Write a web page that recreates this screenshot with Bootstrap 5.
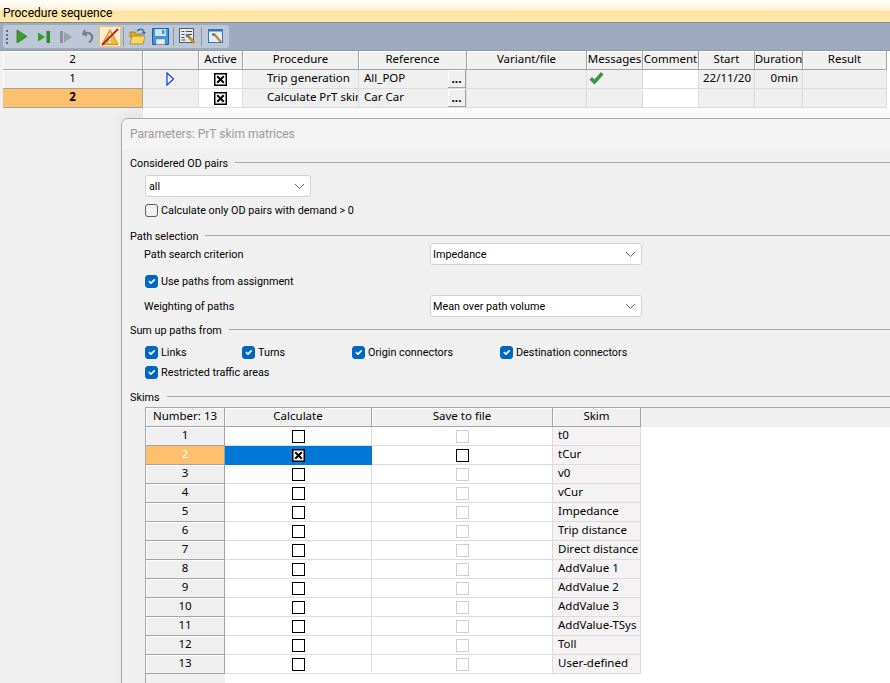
<!DOCTYPE html>
<html lang="en">
<head>
  <meta charset="UTF-8">
  <meta name="viewport" content="width=device-width, initial-scale=1.0">
  <title>Procedure sequence</title>
  <link href="https://cdn.jsdelivr.net/npm/bootstrap@5.3.0/dist/css/bootstrap.min.css" rel="stylesheet">
  <style>
    html, body { height: 100%; }
    body { background: #fff; color: #000; overflow: hidden; position: relative; font-family: Roboto, "Liberation Sans", sans-serif; font-size: 10.8px; }

    .title-strip { height: 23px; padding: 5px 0 0 3px; font-size: 12px; line-height: 16px; border-bottom: 1px solid #8a8a8a; background: linear-gradient(#fffefa 0, #fff3d6 10px, #ffe3a0 11px, #ffe8ae 22px); }
    .tool-band { height: 28px; padding: 2px 0 0 3px; background: #9daabf; border-bottom: 1px solid #9a9a9a; }
    .tool-pill { width: 226px; height: 23px; background: #bcc7d8; border-radius: 3px; }
    .tool-grip { width: 8px; height: 16px; margin-left: 0; background: radial-gradient(circle, #5d6b80 1px, transparent 1.3px) center top / 4px 4px repeat-y; }
    .tool-btn { width: 22px; height: 23px; padding: 0; border: 0; border-radius: 0; --bs-btn-bg: transparent; }
    .tool-btn.is-on { height: 21px; background: #ffeccf; border: 1px solid #e6c46a; }
    .tool-sep { width: 1px; height: 19px; margin: 0 3px 0 2px; background: #8b97a9; }

    .main-grid { border-collapse: separate; border-spacing: 0; table-layout: fixed; margin: 0 0 0 3px; width: 884px; line-height: 18px; font-family: "Noto Sans", "Open Sans", sans-serif; font-size: 11.5px; }
    .main-grid td, .main-grid th, .skim-grid td, .skim-grid th { padding: 0; height: 19px; font-weight: 400; overflow: hidden; white-space: nowrap; }
    .main-grid th.head-cell, .skim-grid th.head-cell { background: #f0f0f0; text-align: center; line-height: 16px; padding-bottom: 2px; border-right: 1px solid #a3a3a3; border-bottom: 1px solid #a3a3a3; box-shadow: inset 1px 1px 0 #fff; }
    .clip-center { display: flex; justify-content: center; overflow: hidden; }
    .main-grid td { background: #efefef; border-right: 1px solid #dcdcdc; border-bottom: 1px solid #dcdcdc; position: relative; }
    .main-grid td.cell-white { background: #fff; text-align: center; }
    .main-grid td.row-head, .skim-grid td.row-head { background: #efefef; text-align: center; line-height: 16px; padding-bottom: 2px; border-right: 1px solid #a3a3a3; border-bottom: 1px solid #a3a3a3; box-shadow: inset 1px 1px 0 #fff; }
    .main-grid td.row-head.is-current { background: #ffc06e; font-weight: 700; box-shadow: none; }
    .skim-grid td.row-head.is-current { background: #ffc06e; color: #fff; box-shadow: none; }
    .main-grid td.pad-proc, .main-grid td.pad-ref, .main-grid td.pad-start, .main-grid td.pad-dur { line-height: 16px; padding-bottom: 2px; }
    .main-grid td.pad-proc { padding-left: 24px; }
    .main-grid td.pad-ref { padding-left: 5px; }
    .main-grid td.pad-start { padding-left: 4px; }
    .main-grid td.pad-dur { text-align: right; padding-right: 4px; }
    .dots-btn { position: absolute; right: 0; top: 0; width: 18px; height: 18px; padding: 0; line-height: 14px; font-size: 12px; font-weight: 700; border-radius: 0; color: #000; --bs-btn-bg: #f0f0f0; background: #f0f0f0; border: 0; border-right: 1px solid #a3a3a3; border-bottom: 1px solid #a3a3a3; box-shadow: inset 1px 1px 0 #fff; }
    .msg-tick { display: block; margin: 0 0 1px 2px; }
    .w-1 { width: 140px; } .w-2 { width: 56px; } .w-3 { width: 44px; } .w-4 { width: 116px; } .w-5 { width: 108px; }
    .w-6 { width: 120px; } .w-7 { width: 56px; } .w-8 { width: 56px; } .w-9 { width: 56px; } .w-10 { width: 48px; } .w-11 { width: 84px; }

    .left-strip { position: absolute; left: 0; top: 50px; bottom: 0; width: 143px; background: #f0f0f0; z-index: -1; }
    .grid-box { width: 13px; height: 13px; display: block; margin: 0 auto; }

    .dialog-pane { position: absolute; left: 121px; top: 118px; width: 800px; bottom: -20px; background: #f0f0f0; border: 1px solid #a8a8a8; border-radius: 7px 0 0 0; box-shadow: -2px -6px 10px rgba(0,0,0,.04); overflow: hidden; }
    .dialog-title { height: 31px; background: #f3f3f3; color: #9a9a9a; font-size: 12px; line-height: 30px; padding-left: 8px; }
    .dialog-body { padding-left: 8px; }
    .sec-head { height: 16px; line-height: 16px; gap: 7px; }
    .sec-head .sec-text, .tick-row label, .label-col { padding-top: 2px; }
    .sec-rule { height: 1px; background: #a8a8a8; margin-top: -1px; }
    .mt-a { margin-top: 5px; } .mt-b { margin-top: 8px; } .mt-c { margin-top: 3px; } .mt-d { margin-top: 6px; } .mt-e { margin-top: 4px; } .mt-f { margin-top: 7px; }
    .mt-g { margin-top: 2px; } .pull-up { margin-top: -1px; }
    .in-1 { padding-left: 15px; }
    .in-2 { padding-left: 14px; }
    .label-col { width: 286px; }
    .win-select { height: 22px; padding: 2px 20px 0 3px; font-size: 10.8px; line-height: 18px; color: #000; border: 1px solid #d2d2d2; border-radius: 3px; background-color: #fff; background-size: 11px 7px; background-position: right 5px center;
      background-image: url("data:image/svg+xml,%3csvg xmlns='http://www.w3.org/2000/svg' viewBox='0 0 11 7'%3e%3cpath fill='none' stroke='%23666' d='M1 1l4.5 4.5L10 1'/%3e%3c/svg%3e"); }
    .sel-sm { width: 166px; }
    .sel-lg { width: 212px; padding-left: 2px; }
    .tick-row { height: 20px; line-height: 20px; }
    .tick-row .form-check-input { width: 13px; height: 13px; margin: 0 3px 0 0; border: 1px solid #5f5f5f; border-radius: 3px; background-color: #f0f0f0; flex: none; }
    .tick-row .form-check-input:checked { background-color: #0067c0; border-color: #0067c0; background-size: 11px; }
    .tick-a { width: 97px; } .tick-b { width: 110px; } .tick-c { width: 148px; }

    .skim-wrap { margin-left: 15px; height: 300px; border-top: 1px solid #a8a8a8; border-left: 1px solid #a8a8a8; background: #fff; }
    .skim-grid { border-collapse: separate; border-spacing: 0; table-layout: fixed; width: 100%; line-height: 18px; font-family: "Noto Sans", "Open Sans", sans-serif; font-size: 11.5px; }
    .skim-grid td { background: #fff; text-align: center; border-right: 1px solid #dcdcdc; border-bottom: 1px solid #dcdcdc; }
    .skim-grid td.skim-name { background: #f4f2f2; text-align: left; padding-left: 5px; padding-bottom: 2px; line-height: 16px; }
    .skim-grid td.is-blue { background: #0078d7; border-color: #0078d7; }
    .skim-grid td.blank-cell { border: 0; background: #fff; }
    .skim-grid td.tail-cell { border: 0; background: #f0f0f0; box-shadow: none; }
    .head-fill { background: #f0f0f0; }
    .s-1 { width: 79px; } .s-2 { width: 147px; } .s-3 { width: 181px; } .s-4 { width: 88px; }
  </style>
</head>
<body>
  <svg width="0" height="0" class="d-block position-absolute">
    <symbol id="box-x" viewBox="0 0 13 13"><rect x=".75" y=".75" width="11.5" height="11.5" fill="#fff" stroke="#000" stroke-width="1.5"/><path d="M3.2 3.2l6.6 6.6M9.800 3.2l-6.6 6.6" stroke="#000" stroke-width="2"/></symbol>
    <symbol id="box-on" viewBox="0 0 13 13"><rect x=".5" y=".5" width="12" height="12" fill="#fff" stroke="#000"/></symbol>
    <symbol id="box-off" viewBox="0 0 13 13"><rect x=".5" y=".5" width="12" height="12" fill="#fff" stroke="#cfcfcf"/></symbol>
  </svg>

  <div class="left-strip"></div>
  <div class="title-strip">Procedure sequence</div>

  <div class="tool-band">
    <div class="tool-pill d-flex align-items-center">
      <span class="tool-grip"></span>
      <button class="btn tool-btn d-flex align-items-center justify-content-center" aria-label="Run">
        <svg width="12" height="15" viewBox="0 0 12 15"><path d="M1 1l10 6.500L1 14z" fill="#3d9a2f" stroke="#2a7f23" stroke-width=".8"/></svg>
      </button>
      <button class="btn tool-btn d-flex align-items-center justify-content-center" aria-label="Step">
        <svg width="14" height="14" viewBox="0 0 14 14"><path d="M1 2.500l7 4.500-7 4.500z" fill="#3d9a2f"/><rect x="9.500" y="1" width="3.500" height="12" fill="#2f8c2a"/></svg>
      </button>
      <button class="btn tool-btn d-flex align-items-center justify-content-center" aria-label="Step disabled">
        <svg width="14" height="14" viewBox="0 0 14 14"><rect x="1" y="1" width="3" height="12" fill="#8e9299"/><path d="M5 1.500l8 5.500-8 5.500z" fill="#9da1a8"/></svg>
      </button>
      <button class="btn tool-btn d-flex align-items-center justify-content-center" aria-label="Undo">
        <svg width="13" height="15" viewBox="0 0 13 15"><path d="M3 1L1 5l4 1.500" fill="none" stroke="#7b7e84" stroke-width="2"/><path d="M2 4.500c5-2 9 1 8 5-.4 1.700-1.500 3-3 4" fill="none" stroke="#7b7e84" stroke-width="2.200"/></svg>
      </button>
      <button class="btn tool-btn is-on d-flex align-items-center justify-content-center" aria-label="Warnings">
        <svg width="18" height="18" viewBox="0 0 18 18"><path d="M9 1.500L17 16.500H1z" fill="#f5b93a" stroke="#b9821c" stroke-width=".8"/><rect x="8" y="6" width="2" height="6" fill="#fff"/><rect x="8" y="13" width="2" height="2" fill="#fff"/><path d="M1 17L17 1" stroke="#b5272a" stroke-width="2"/></svg>
      </button>
      <span class="tool-sep"></span>
      <button class="btn tool-btn d-flex align-items-center justify-content-center" aria-label="Open">
        <svg width="18" height="17" viewBox="0 0 18 17"><path d="M1 4h5l1 2h6v3H1z" fill="#d8a92c" stroke="#96772a" stroke-width=".7"/><path d="M1 16l2-8h13l-2 8z" fill="#f7d75e" stroke="#a8852c" stroke-width=".8"/><path d="M8 3c3-3 6-2 7 1" fill="none" stroke="#2f6fb5" stroke-width="1.500"/><path d="M13 4h4l-2 3z" fill="#2f6fb5"/></svg>
      </button>
      <button class="btn tool-btn d-flex align-items-center justify-content-center" aria-label="Save">
        <svg width="17" height="17" viewBox="0 0 17 17"><path d="M.5.5h16v16H.5z" fill="#3d97dd" stroke="#1f5f99"/><rect x="3" y="1" width="11" height="7" fill="#cfe5f6"/><rect x="10" y="2" width="2.500" height="4" fill="#3d97dd"/><rect x="4" y="11" width="9" height="5.500" fill="#e8e8e8" stroke="#7a8794" stroke-width=".5"/></svg>
      </button>
      <span class="tool-sep"></span>
      <button class="btn tool-btn d-flex align-items-center justify-content-center" aria-label="Settings">
        <svg width="18" height="17" viewBox="0 0 18 17"><rect x=".5" y=".5" width="14" height="14" fill="#e8ebef" stroke="#555c66"/><path d="M2.500 3.500h3M7 3.500h6M2.500 6.500h3M7 6.500h6M2.500 9.500h3M2.500 12h4" stroke="#474d57"/><path d="M8 7l7.500 8" stroke="#c08a25" stroke-width="2.600"/><circle cx="8.500" cy="7.500" r="1.800" fill="#6f7680"/></svg>
      </button>
      <span class="tool-sep"></span>
      <button class="btn tool-btn d-flex align-items-center justify-content-center" aria-label="Options">
        <svg width="16" height="15" viewBox="0 0 16 15"><rect x=".5" y=".5" width="14" height="13" fill="#e4eef7" stroke="#2f77b8"/><rect x="1" y="1" width="13" height="1.500" fill="#2f77b8"/><path d="M6 5l7 8" stroke="#c08a25" stroke-width="2.300"/><circle cx="5.500" cy="5.500" r="1.600" fill="#6f7680"/></svg>
      </button>
    </div>
  </div>

  <table class="main-grid">
    <colgroup>
      <col class="w-1"><col class="w-2"><col class="w-3"><col class="w-4"><col class="w-5"><col class="w-6"><col class="w-7"><col class="w-8"><col class="w-9"><col class="w-10"><col class="w-11">
    </colgroup>
    <thead>
      <tr>
        <th class="head-cell">2</th>
        <th class="head-cell"></th>
        <th class="head-cell">Active</th>
        <th class="head-cell">Procedure</th>
        <th class="head-cell">Reference</th>
        <th class="head-cell">Variant/file</th>
        <th class="head-cell"><div class="clip-center">Messages</div></th>
        <th class="head-cell"><div class="clip-center">Comment</div></th>
        <th class="head-cell">Start</th>
        <th class="head-cell"><div class="clip-center">Duration</div></th>
        <th class="head-cell">Result</th>
      </tr>
    </thead>
    <tbody>
      <tr>
        <td class="row-head">1</td>
        <td class="text-center"><svg width="9" height="14" viewBox="0 0 9 14" class="d-block mx-auto"><path d="M1 1l6.500 6L1 13z" fill="#fff" stroke="#1447e0" stroke-width="1.300"/></svg></td>
        <td class="cell-white"><svg class="grid-box"><use href="#box-x"/></svg></td>
        <td class="pad-proc">Trip generation</td>
        <td class="pad-ref">All_POP<button class="btn dots-btn">...</button></td>
        <td></td>
        <td><svg width="15" height="15" viewBox="0 0 15 15" class="msg-tick"><path d="M.5 8.500l2.500-2.500 2.500 2.500L12 1l2.500 2.500-9 10z" fill="#3f8f45"/></svg></td>
        <td class="cell-white"></td>
        <td class="pad-start">22/11/20</td>
        <td class="pad-dur">0min</td>
        <td></td>
      </tr>
      <tr>
        <td class="row-head is-current">2</td>
        <td></td>
        <td class="cell-white"><svg class="grid-box"><use href="#box-x"/></svg></td>
        <td class="pad-proc">Calculate PrT skim matrices</td>
        <td class="pad-ref">Car Car<button class="btn dots-btn">...</button></td>
        <td></td>
        <td></td>
        <td class="cell-white"></td>
        <td></td>
        <td></td>
        <td></td>
      </tr>
    </tbody>
  </table>

  <div class="dialog-pane">
    <div class="dialog-title">Parameters: PrT skim matrices</div>
    <div class="dialog-body">
      <div class="sec-head d-flex align-items-center mt-a"><span class="sec-text">Considered OD pairs</span><span class="sec-rule flex-grow-1"></span></div>
      <div class="in-1 mt-e"><select class="form-select win-select sel-sm"><option>all</option></select></div>
      <div class="in-1 mt-c tick-row d-flex align-items-center"><input class="form-check-input" type="checkbox" id="c-demand"><label for="c-demand">Calculate only OD pairs with demand &gt; 0</label></div>

      <div class="sec-head d-flex align-items-center mt-b"><span class="sec-text">Path selection</span><span class="sec-rule flex-grow-1"></span></div>
      <div class="in-2 pull-up d-flex align-items-center"><span class="label-col">Path search criterion</span><select class="form-select win-select sel-lg"><option>Impedance</option></select></div>
      <div class="in-1 mt-d tick-row d-flex align-items-center"><input class="form-check-input" type="checkbox" id="c-paths" checked><label for="c-paths">Use paths from assignment</label></div>
      <div class="in-2 mt-e d-flex align-items-center"><span class="label-col">Weighting of paths</span><select class="form-select win-select sel-lg"><option>Mean over path volume</option></select></div>

      <div class="sec-head d-flex align-items-center mt-a"><span class="sec-text">Sum up paths from</span><span class="sec-rule flex-grow-1"></span></div>
      <div class="in-1 mt-e tick-row d-flex align-items-center">
        <span class="tick-a d-flex align-items-center"><input class="form-check-input" type="checkbox" id="c-links" checked><label for="c-links">Links</label></span>
        <span class="tick-b d-flex align-items-center"><input class="form-check-input" type="checkbox" id="c-turns" checked><label for="c-turns">Turns</label></span>
        <span class="tick-c d-flex align-items-center"><input class="form-check-input" type="checkbox" id="c-origin" checked><label for="c-origin">Origin connectors</label></span>
        <span class="d-flex align-items-center"><input class="form-check-input" type="checkbox" id="c-dest" checked><label for="c-dest">Destination connectors</label></span>
      </div>
      <div class="in-1 tick-row d-flex align-items-center"><input class="form-check-input" type="checkbox" id="c-restrict" checked><label for="c-restrict">Restricted traffic areas</label></div>

      <div class="sec-head d-flex align-items-center mt-f"><span class="sec-text">Skims</span><span class="sec-rule flex-grow-1"></span></div>
      <div class="skim-wrap mt-g">
        <table class="skim-grid">
          <colgroup><col class="s-1"><col class="s-2"><col class="s-3"><col class="s-4"><col></colgroup>
          <thead>
            <tr><th class="head-cell">Number: 13</th><th class="head-cell">Calculate</th><th class="head-cell">Save to file</th><th class="head-cell">Skim</th><th class="head-fill"></th></tr>
          </thead>
          <tbody>
            <tr><td class="row-head">1</td><td><svg class="grid-box"><use href="#box-on"/></svg></td><td><svg class="grid-box"><use href="#box-off"/></svg></td><td class="skim-name">t0</td><td class="blank-cell"></td></tr>
            <tr><td class="row-head is-current">2</td><td class="is-blue"><svg class="grid-box"><use href="#box-x"/></svg></td><td><svg class="grid-box"><use href="#box-on"/></svg></td><td class="skim-name">tCur</td><td class="blank-cell"></td></tr>
            <tr><td class="row-head">3</td><td><svg class="grid-box"><use href="#box-on"/></svg></td><td><svg class="grid-box"><use href="#box-off"/></svg></td><td class="skim-name">v0</td><td class="blank-cell"></td></tr>
            <tr><td class="row-head">4</td><td><svg class="grid-box"><use href="#box-on"/></svg></td><td><svg class="grid-box"><use href="#box-off"/></svg></td><td class="skim-name">vCur</td><td class="blank-cell"></td></tr>
            <tr><td class="row-head">5</td><td><svg class="grid-box"><use href="#box-on"/></svg></td><td><svg class="grid-box"><use href="#box-off"/></svg></td><td class="skim-name">Impedance</td><td class="blank-cell"></td></tr>
            <tr><td class="row-head">6</td><td><svg class="grid-box"><use href="#box-on"/></svg></td><td><svg class="grid-box"><use href="#box-off"/></svg></td><td class="skim-name">Trip distance</td><td class="blank-cell"></td></tr>
            <tr><td class="row-head">7</td><td><svg class="grid-box"><use href="#box-on"/></svg></td><td><svg class="grid-box"><use href="#box-off"/></svg></td><td class="skim-name">Direct distance</td><td class="blank-cell"></td></tr>
            <tr><td class="row-head">8</td><td><svg class="grid-box"><use href="#box-on"/></svg></td><td><svg class="grid-box"><use href="#box-off"/></svg></td><td class="skim-name">AddValue 1</td><td class="blank-cell"></td></tr>
            <tr><td class="row-head">9</td><td><svg class="grid-box"><use href="#box-on"/></svg></td><td><svg class="grid-box"><use href="#box-off"/></svg></td><td class="skim-name">AddValue 2</td><td class="blank-cell"></td></tr>
            <tr><td class="row-head">10</td><td><svg class="grid-box"><use href="#box-on"/></svg></td><td><svg class="grid-box"><use href="#box-off"/></svg></td><td class="skim-name">AddValue 3</td><td class="blank-cell"></td></tr>
            <tr><td class="row-head">11</td><td><svg class="grid-box"><use href="#box-on"/></svg></td><td><svg class="grid-box"><use href="#box-off"/></svg></td><td class="skim-name">AddValue-TSys</td><td class="blank-cell"></td></tr>
            <tr><td class="row-head">12</td><td><svg class="grid-box"><use href="#box-on"/></svg></td><td><svg class="grid-box"><use href="#box-off"/></svg></td><td class="skim-name">Toll</td><td class="blank-cell"></td></tr>
            <tr><td class="row-head">13</td><td><svg class="grid-box"><use href="#box-on"/></svg></td><td><svg class="grid-box"><use href="#box-off"/></svg></td><td class="skim-name">User-defined</td><td class="blank-cell"></td></tr>
            <tr><td class="row-head tail-cell"></td><td class="blank-cell"></td><td class="blank-cell"></td><td class="blank-cell"></td><td class="blank-cell"></td></tr>
          </tbody>
        </table>
      </div>
    </div>
  </div>

  <script src="https://cdn.jsdelivr.net/npm/bootstrap@5.3.0/dist/js/bootstrap.bundle.min.js"></script>
</body>
</html>
